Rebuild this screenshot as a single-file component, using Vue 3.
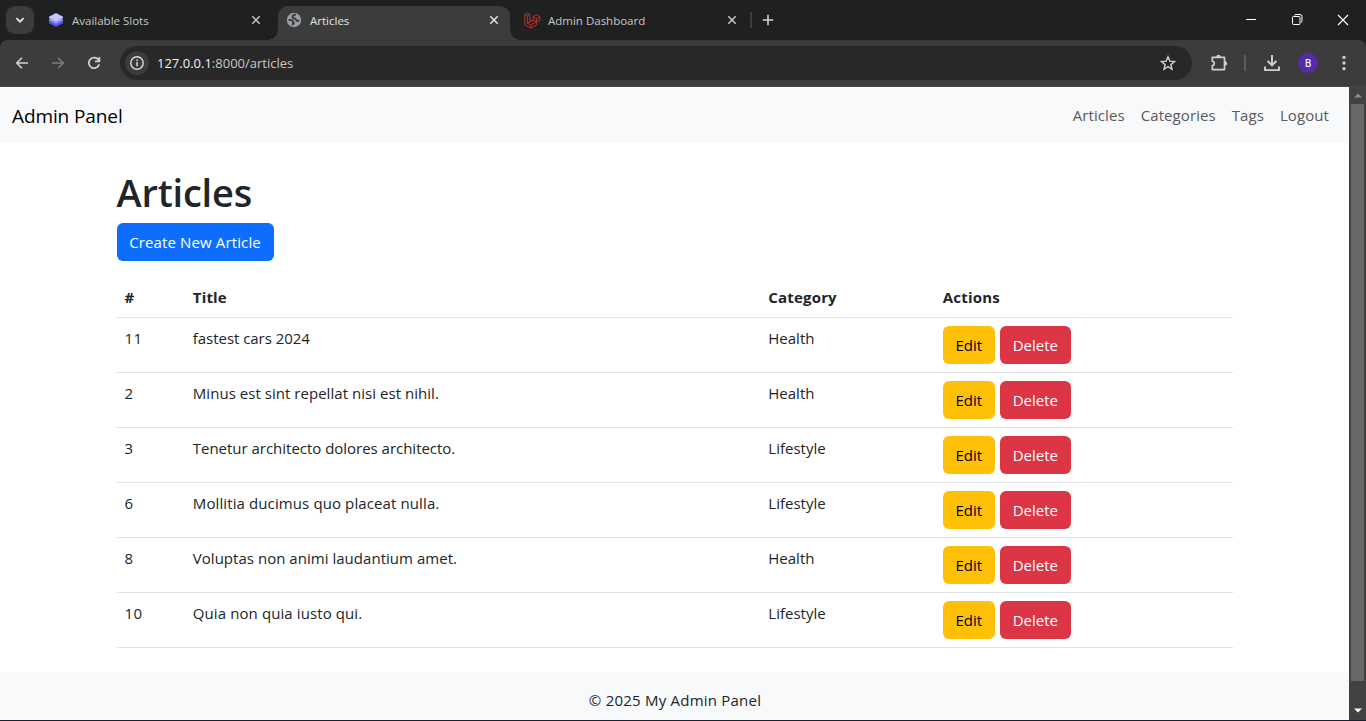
<script setup>
const tabs = [
  { title: 'Available Slots', icon: 'layers' },
  { title: 'Articles', icon: 'globe', active: true },
  { title: 'Admin Dashboard', icon: 'laravel' },
]
const links = ['Articles', 'Categories', 'Tags', 'Logout']
const rows = [
  { id: 11, title: 'fastest cars 2024', category: 'Health', tracking: -0.04 },
  { id: 2, title: 'Minus est sint repellat nisi est nihil.', category: 'Health', tracking: 0.04 },
  { id: 3, title: 'Tenetur architecto dolores architecto.', category: 'Lifestyle', tracking: -0.02 },
  { id: 6, title: 'Mollitia ducimus quo placeat nulla.', category: 'Lifestyle', tracking: 0.11 },
  { id: 8, title: 'Voluptas non animi laudantium amet.', category: 'Health', tracking: 0.03 },
  { id: 10, title: 'Quia non quia iusto qui.', category: 'Lifestyle', tracking: 0.1 },
]
</script>

<template>
  <div class="window">
    <header class="tabstrip">
      <button class="tab-search" aria-label="Search tabs">
        <svg width="10" height="10" viewBox="0 0 10 10"><path d="M1.4 3.2 5 6.7l3.6-3.5" fill="none" stroke="#e3e3e3" stroke-width="1.8" /></svg>
      </button>
      <div v-for="tab in tabs" :key="tab.title" class="tab" :class="{ active: tab.active }">
        <svg v-if="tab.icon === 'layers'" class="favicon" width="16" height="16" viewBox="0 0 16 16">
          <path d="M1 9.300h14v2L8 15l-7-3.700z" fill="#5450f0" />
          <path d="M1 7h14v1.700l-7 3.800-7-3.800z" fill="#8784fa" />
          <path d="M1 4.700 8 1l7 3.700v1.400l-7 3.800-7-3.800z" fill="#c3c3fe" />
        </svg>
        <svg v-else-if="tab.icon === 'globe'" class="favicon" width="16" height="16" viewBox="0 0 16 16">
          <circle cx="8" cy="8" r="7.200" fill="#9aa0a6" />
          <g fill="none" stroke="#3c3c3c" stroke-width="2" stroke-linejoin="round">
            <path d="M9.800 2.600C7.700 2.800 6.400 3.800 6.500 5.300c.2 1.200 2 1.100 3 1.500.9.500.4 1.600 1.300 2 .9.300 1.500-.2 2.600-.2" />
            <path d="M2.500 8c1.800-.2 3.500-.1 4.100.8.500.9 0 1.500.8 1.900.900.4.700 1.200-.6 1.300v1.500" />
          </g>
        </svg>
        <svg v-else class="favicon laravel" width="17" height="17" viewBox="0 0 17 17">
          <path d="M.8 2.500 3.400 1 6 2.500v7.300l3.100-1.700V4.700L12.400 2.800l3.500 1.900v3.500l-3.400 1.900v2.800L6.800 16.100.8 12.700zM.8 2.500 3.400 4 6 2.500M3.400 4v7.100l3.400 1.900 5.700-3.100M6.800 13v3.100M9.100 4.700l3.400 1.900 3.400-1.900M12.500 6.600v3.300L9.100 8.100 3.400 11.100" fill="none" stroke="#c52b25" stroke-width="1" />
        </svg>
        <span class="tab-title">{{ tab.title }}</span>
        <svg class="tab-close" width="10" height="10" viewBox="0 0 10 10"><path d="m1.300 1.300 7.400 7.400m0-7.400L1.300 8.700" stroke="currentColor" stroke-width="1.500" /></svg>
      </div>
      <span class="tab-divider"></span>
      <svg class="new-tab" width="12" height="12" viewBox="0 0 12 12"><path d="M6 .8v10.400M.8 6h10.400" stroke="#d0d0d0" stroke-width="1.600" /></svg>
      <div class="window-controls">
        <svg width="12" height="12" viewBox="0 0 12 12"><path d="M1 5.500h10" stroke="#fff" /></svg>
        <svg width="12" height="12" viewBox="0 0 12 12"><path d="M3.500 1.500q.3-1 1.500-1h4q2 0 2 2v4q0 1.800-1 2" fill="none" stroke="#fff" /><rect x="1.500" y="2.500" width="7.500" height="8" rx="1" fill="none" stroke="#fff" /></svg>
        <svg width="12" height="12" viewBox="0 0 12 12"><path d="m1 1 10 10M11 1 1 11" stroke="#fff" stroke-width="1.200" /></svg>
      </div>
    </header>

    <div class="toolbar">
      <svg class="nav-icon back" width="14" height="14" viewBox="0 0 14 14"><path d="M13 7H2M7 1.700 1.700 7 7 12.300" fill="none" stroke="#d2d2d2" stroke-width="1.600" /></svg>
      <svg class="nav-icon forward" width="14" height="14" viewBox="0 0 14 14"><path d="M1 7h11M7 1.700 12.300 7 7 12.300" fill="none" stroke="#7c7c7c" stroke-width="1.600" /></svg>
      <svg class="nav-icon reload" width="14" height="14" viewBox="0 0 14 14"><path d="M11.800 4.500A5.300 5.300 0 1 0 12.200 8.200M12.400 1v4.300H8" fill="none" stroke="#d2d2d2" stroke-width="1.700" /></svg>
      <div class="address">
        <span class="site-info">
          <svg width="16" height="16" viewBox="0 0 16 16"><circle cx="8" cy="8" r="6.200" fill="none" stroke="#dcdcdc" stroke-width="1.400" /><path d="M8 7v4.200M8 4.600v1.500" stroke="#dcdcdc" stroke-width="1.500" /></svg>
        </span>
        <span class="url"><b>127.0.0.1</b>:8000/articles</span>
        <svg class="star" width="16" height="16" viewBox="0 0 16 16"><path d="m8 1.800 1.800 4.300 4.700.4-3.600 3.100 1.100 4.600L8 11.700l-4 2.500 1.100-4.600-3.600-3.100 4.700-.4z" fill="none" stroke="#d0d0d0" stroke-width="1.400" /></svg>
      </div>
      <svg class="puzzle" width="18" height="18" viewBox="0 0 18 18"><path d="M2.300 3.400h12.200v12.200H2.300v-3.900c2.700-.6 2.700-3.900 0-4.500z" fill="none" stroke="#cfcfcf" stroke-width="1.700" stroke-linejoin="round" /><path d="M6.300 3a2.200 2.200 0 0 1 4.400 0zM15 7.200a2.200 2.200 0 0 1 0 4.400z" fill="#cfcfcf" /></svg>
      <span class="toolbar-divider"></span>
      <svg class="download" width="18" height="18" viewBox="0 0 18 18"><path d="M9 1v10M4.600 7 9 11.300 13.400 7M2 12.500v3.600h14v-3.600" fill="none" stroke="#cfcfcf" stroke-width="1.900" /></svg>
      <span class="avatar">B</span>
      <svg class="menu" width="4" height="16" viewBox="0 0 4 16"><g fill="#cfcfcf"><circle cx="2" cy="2.300" r="1.650" /><circle cx="2" cy="8" r="1.650" /><circle cx="2" cy="13.700" r="1.650" /></g></svg>
    </div>

    <div class="viewport">
      <div class="page">
        <nav class="navbar">
          <span class="brand">Admin Panel</span>
          <span class="links"><a v-for="link in links" :key="link">{{ link }}</a></span>
        </nav>
        <main class="container">
          <h1>Articles</h1>
          <button class="btn create">Create New Article</button>
          <table>
            <colgroup><col class="c-id" /><col class="c-title" /><col class="c-cat" /><col /></colgroup>
            <thead>
              <tr><th>#</th><th>Title</th><th>Category</th><th>Actions</th></tr>
            </thead>
            <tbody>
              <tr v-for="row in rows" :key="row.id">
                <td class="num">{{ row.id }}</td>
                <td :style="{ letterSpacing: row.tracking + 'px' }">{{ row.title }}</td>
                <td>{{ row.category }}</td>
                <td><div class="actions"><button class="btn edit">Edit</button><button class="btn delete">Delete</button></div></td>
              </tr>
            </tbody>
          </table>
        </main>
        <footer>© 2025 My Admin Panel</footer>
      </div>
      <div class="scrollbar">
        <svg width="8" height="5" viewBox="0 0 8 5"><path d="M0 4.500 4 .5l4 4z" fill="#8b8b8b" /></svg>
        <div class="thumb"></div>
        <svg width="8" height="5" viewBox="0 0 8 5"><path d="M0 .5h8l-4 4z" fill="#fff" /></svg>
      </div>
    </div>
  </div>
</template>

<style>
body {
  margin: 0;
  overflow: hidden;
}
</style>

<style scoped>
* {
  box-sizing: border-box;
}
.window {
  width: 1366px;
  height: 721px;
  display: flex;
  flex-direction: column;
  background: #1f2120;
  border-bottom: 1px solid #172230;
  font-family: "Open Sans", "Noto Sans", sans-serif;
  overflow: hidden;
}
svg {
  display: block;
  flex: none;
}
button {
  border: 0;
  padding: 0;
  font: inherit;
  letter-spacing: inherit;
}
.tabstrip {
  height: 40px;
  flex: none;
  display: flex;
  align-items: center;
}
.tab-search {
  width: 28px;
  height: 28px;
  margin: 0 6px;
  border-radius: 9px;
  background: #3c3c3c;
  display: grid;
  place-items: center;
}
.tab {
  position: relative;
  width: 238px;
  height: 34px;
  margin-top: 6px;
  padding: 0 17px 6px 8px;
  display: flex;
  align-items: center;
  color: #c7c7c7;
  font-size: 11.5px;
}
.tab.active {
  width: 232px;
  padding-right: 11px;
  margin-right: 6px;
  background: #3c3c3c;
  border-radius: 10px 10px 0 0;
  color: #e3e3e3;
}
.tab.active::before,
.tab.active::after {
  content: "";
  position: absolute;
  bottom: 0;
  width: 10px;
  height: 10px;
}
.tab.active::before {
  left: -10px;
  background: radial-gradient(circle at 0 0, transparent 9.5px, #3c3c3c 10px);
}
.tab.active::after {
  right: -10px;
  background: radial-gradient(circle at 100% 0, transparent 9.5px, #3c3c3c 10px);
}
.favicon {
  margin-right: 8px;
}
.favicon.laravel {
  margin-right: 7px;
}
.tab-title {
  flex: 1;
  white-space: nowrap;
}
.tab-divider {
  width: 2px;
  height: 16px;
  margin-left: -4px;
  background: #3c3c3c;
}
.new-tab {
  margin-left: 10px;
}
.window-controls {
  margin-left: auto;
  padding-right: 17px;
  display: flex;
  gap: 34px;
}
.toolbar {
  height: 47px;
  flex: none;
  display: flex;
  align-items: center;
  background: #3c3c3c;
  border-bottom: 1px solid #484848;
  border-radius: 8px 8px 0 0;
}
.back {
  margin-left: 15px;
}
.forward,
.reload {
  margin-left: 22px;
}
.address {
  width: 1072px;
  height: 34px;
  margin-left: 19px;
  padding: 0 16px 0 5px;
  display: flex;
  align-items: center;
  border-radius: 17px;
  background: #282828;
  font-size: 13px;
  color: #c7c7c7;
}
.address b {
  font-weight: 400;
  color: #f0f0f0;
}
.site-info {
  width: 24px;
  height: 24px;
  border-radius: 50%;
  background: #3c3c3c;
  display: grid;
  place-items: center;
  margin-right: 8px;
}
.star {
  margin-left: auto;
}
.puzzle {
  margin-left: 18px;
}
.toolbar-divider {
  width: 2px;
  height: 16px;
  margin-left: 16px;
  background: #5c5c5c;
}
.download {
  margin-left: 17px;
}
.avatar {
  width: 20px;
  height: 20px;
  margin-left: 17px;
  border-radius: 50%;
  background: #512da8;
  color: #eee;
  font-size: 10px;
  font-weight: 600;
  line-height: 20px;
  text-align: center;
}
.menu {
  margin-left: 24px;
}
.viewport {
  flex: 1;
  min-height: 0;
  display: flex;
}
.page {
  width: 1349px;
  display: flex;
  flex-direction: column;
  background: #fff;
  color: #212529;
  font-size: 15px;
  line-height: 24px;
}
.navbar {
  height: 56px;
  padding: 2px 20px 0 12px;
  display: flex;
  align-items: center;
  justify-content: space-between;
  background: #f8f9fa;
}
.brand {
  font-size: 19px;
  letter-spacing: -0.1px;
  color: #000;
  line-height: 30px;
}
.links {
  display: flex;
  gap: 16px;
  color: #595a5b;
  letter-spacing: 0.08px;
  padding-bottom: 2px;
}
.container {
  width: 1116px;
  margin: 24px 0 24px 116.5px;
}
h1 {
  margin: 0 0 8px;
  padding-top: 1px;
  height: 48px;
  font-size: 38px;
  line-height: 48px;
  font-weight: 600;
  letter-spacing: -0.18px;
}
.btn {
  height: 38px;
  border-radius: 6px;
  white-space: nowrap;
  text-align: center;
}
.create {
  display: block;
  width: 157px;
  background: #0d6efd;
  color: #fff;
  letter-spacing: 0.13px;
}
table {
  width: 1116px;
  margin-top: 16px;
  border-collapse: collapse;
  table-layout: fixed;
}
.c-id {
  width: 68.3px;
}
.c-title {
  width: 575.5px;
}
.c-cat {
  width: 174.5px;
}
th,
td {
  padding: 8px;
  text-align: left;
  vertical-align: top;
  border-bottom: 1px solid #dee2e6;
}
th {
  font-weight: 700;
  letter-spacing: 0.18px;
}
.num {
  letter-spacing: 0.3px;
}
.actions {
  display: flex;
  gap: 5px;
}
.edit {
  width: 52px;
  background: #ffc107;
  color: #000;
}
.delete {
  width: 71px;
  background: #dc3545;
  color: #fff;
}
footer {
  flex: 1;
  padding: 16px 0 0 1px;
  background: #f8f9fa;
  text-align: center;
  letter-spacing: 0.22px;
}
.scrollbar {
  width: 17px;
  padding: 6px 0 7px;
  display: flex;
  flex-direction: column;
  align-items: center;
  background: #424242;
}
.thumb {
  width: 13px;
  height: 577px;
  margin: 6px 0 auto;
  background: #686868;
}
</style>
